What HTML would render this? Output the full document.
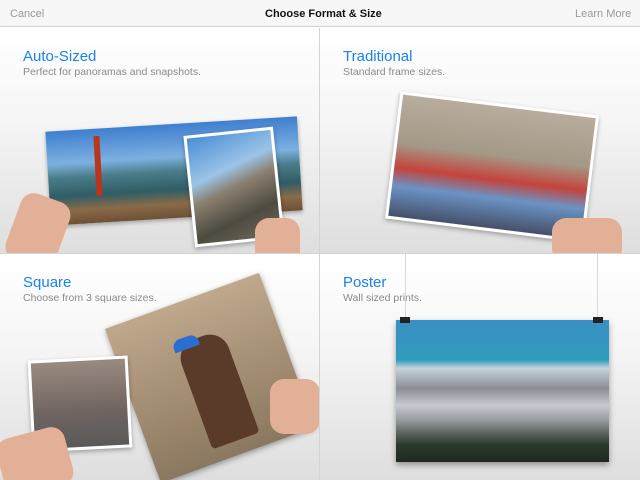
<!DOCTYPE html>
<html><head><style>
*{margin:0;padding:0;box-sizing:border-box}
body{width:640px;height:480px;overflow:hidden;font-family:"Liberation Sans",sans-serif;background:#fff;position:relative}
.nav{position:absolute;left:0;top:0;width:640px;height:27px;background:#f7f7f7;border-bottom:1px solid #d0d0d0;font-size:11px}
.nav span{position:absolute;top:8px}
.q{position:absolute;background:linear-gradient(#fff 0%,#f6f6f6 40%,#dedede 100%);overflow:hidden}
.t{position:absolute;font-size:15px;color:#1a82e8}
.s{position:absolute;font-size:10.5px;color:#8a8a8a}
.a{position:absolute}
.skin{background:#e2b096;border-radius:14px}
</style></head><body>
<div class="nav"><span style="left:10px;color:#999">Cancel</span><span style="left:265px;color:#111;font-weight:bold;font-size:11px">Choose Format &amp; Size</span><span style="left:575px;color:#999">Learn More</span></div>

<div class="q" style="left:0;top:28px;width:319px;height:225px">
<div class="t" style="left:23px;top:20px">Auto-Sized</div>
<div class="s" style="left:23px;top:38px">Perfect for panoramas and snapshots.</div>
<div class="a" style="left:48px;top:96px;width:252px;height:94px;transform:rotate(-3.5deg);background:linear-gradient(#3f7fcf 0%,#7db0e0 35%,#4a7d8a 50%,#2f5d66 70%,#8a6a48 85%,#6e5034 100%);box-shadow:0 2px 4px rgba(0,0,0,.3)"></div>
<div class="a" style="left:95px;top:108px;width:6px;height:60px;background:#b8361e;transform:rotate(-3deg)"></div>
<div class="a" style="left:189px;top:103px;width:90px;height:112px;transform:rotate(-6deg);background:#fff;padding:3px;box-shadow:0 2px 5px rgba(0,0,0,.3)"><div style="width:100%;height:100%;background:linear-gradient(160deg,#4a8ed6 0%,#9cc4e6 35%,#8a8070 50%,#4d4a40 75%,#6f6a5a 100%)"></div></div>
<div class="a skin" style="left:12px;top:168px;width:52px;height:70px;transform:rotate(20deg)"></div>
<div class="a skin" style="left:255px;top:190px;width:45px;height:50px"></div>
</div>

<div class="q" style="left:320px;top:28px;width:320px;height:225px">
<div class="t" style="left:23px;top:20px">Traditional</div>
<div class="s" style="left:23px;top:38px">Standard frame sizes.</div>
<div class="a" style="left:72px;top:75px;width:200px;height:128px;transform:rotate(7deg);background:#fff;padding:3px;box-shadow:0 2px 5px rgba(0,0,0,.3)"><div style="width:100%;height:100%;background:linear-gradient(#b8ad9d 0%,#a49987 40%,#c4443c 60%,#6a93c4 75%,#45506a 100%)"></div></div>
<div class="a skin" style="left:232px;top:190px;width:70px;height:45px"></div>
</div>

<div class="q" style="left:0;top:254px;width:319px;height:226px">
<div class="t" style="left:23px;top:20px">Square</div>
<div class="s" style="left:23px;top:38px">Choose from 3 square sizes.</div>
<div class="a" style="left:128px;top:42px;width:164px;height:164px;transform:rotate(-20deg);background:linear-gradient(#bfa88c,#a08a70 60%,#8a7860);box-shadow:0 2px 6px rgba(0,0,0,.35)"><div style="position:absolute;left:60px;top:40px;width:50px;height:110px;background:#5a3a28;border-radius:20px 20px 4px 4px"></div><div style="position:absolute;left:58px;top:35px;width:26px;height:12px;background:#2a6fd0;border-radius:8px 8px 0 0"></div></div>
<div class="a" style="left:30px;top:104px;width:100px;height:92px;transform:rotate(-3deg);background:#fff;padding:3px;box-shadow:0 2px 5px rgba(0,0,0,.3)"><div style="width:100%;height:100%;background:linear-gradient(#9a8a80,#6e6460 60%,#5a5a5a)"></div></div>
<div class="a skin" style="left:0px;top:178px;width:70px;height:60px;transform:rotate(-15deg)"></div>
<div class="a skin" style="left:270px;top:125px;width:50px;height:55px"></div>
</div>

<div class="q" style="left:320px;top:254px;width:320px;height:226px">
<div class="t" style="left:23px;top:20px">Poster</div>
<div class="s" style="left:23px;top:38px">Wall sized prints.</div>
<div class="a" style="left:85px;top:0;width:1px;height:66px;background:#d8d8d8"></div>
<div class="a" style="left:277px;top:0;width:1px;height:66px;background:#d8d8d8"></div>
<div class="a" style="left:76px;top:66px;width:213px;height:142px;background:linear-gradient(#3b8fc4 0%,#2f9cbc 28%,#c8d2da 34%,#8a8e94 48%,#c6cad0 60%,#9a9ea2 70%,#5a625e 80%,#2a3a2c 88%,#1e2a20 100%);box-shadow:0 3px 6px rgba(0,0,0,.35)"></div>
<div class="a" style="left:80px;top:63px;width:10px;height:6px;background:#222"></div>
<div class="a" style="left:273px;top:63px;width:10px;height:6px;background:#222"></div>
</div>
<div class="a" style="left:319px;top:28px;width:1px;height:452px;background:#d4d4d4"></div>
<div class="a" style="left:0;top:253px;width:640px;height:1px;background:#d4d4d4"></div>
</body></html>
